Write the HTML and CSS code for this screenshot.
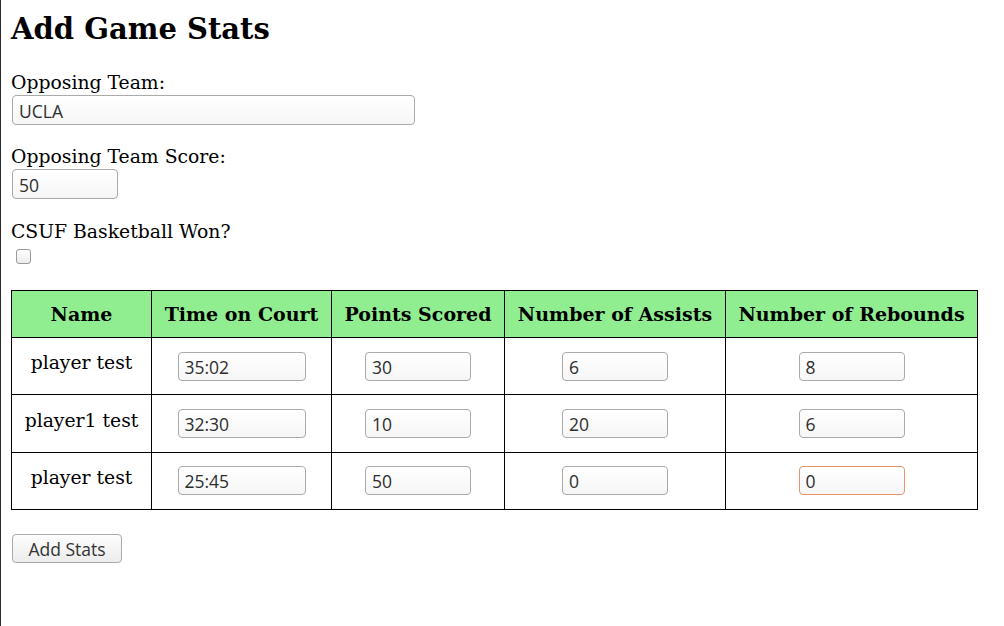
FILE: index.html
```html
<!DOCTYPE html>
<html>
<head>
<meta charset="utf-8">
<link rel="stylesheet" href="styles.css">
</head>
<body>
<div class="page">
  <h1 class="title">Add Game Stats</h1>
  <div class="field">
    <label class="label">Opposing Team:</label>
    <input class="input input-wide" type="text" value="UCLA">
  </div>
  <div class="field">
    <label class="label">Opposing Team Score:</label>
    <input class="input input-short" type="text" value="50">
  </div>
  <div class="field">
    <label class="label">CSUF Basketball Won?</label>
    <span class="checkbox"></span>
  </div>
  <table class="stats">
    <colgroup>
      <col class="c-name"><col class="c-time"><col class="c-pts"><col class="c-ast"><col class="c-reb">
    </colgroup>
    <thead>
      <tr>
        <th>Name</th><th>Time on Court</th><th>Points Scored</th><th>Number of Assists</th><th>Number of Rebounds</th>
      </tr>
    </thead>
    <tbody>
      <tr>
        <td class="name">player test</td>
        <td><input class="input input-time" type="text" value="35:02"></td>
        <td><input class="input input-num" type="text" value="30"></td>
        <td><input class="input input-num" type="text" value="6"></td>
        <td><input class="input input-num" type="text" value="8"></td>
      </tr>
      <tr>
        <td class="name">player1 test</td>
        <td><input class="input input-time" type="text" value="32:30"></td>
        <td><input class="input input-num" type="text" value="10"></td>
        <td><input class="input input-num" type="text" value="20"></td>
        <td><input class="input input-num" type="text" value="6"></td>
      </tr>
      <tr>
        <td class="name">player test</td>
        <td><input class="input input-time" type="text" value="25:45"></td>
        <td><input class="input input-num" type="text" value="50"></td>
        <td><input class="input input-num" type="text" value="0"></td>
        <td><input class="input input-num input-invalid" type="text" value="0"></td>
      </tr>
    </tbody>
  </table>
  <button class="button" type="button">Add Stats</button>
</div>
</body>
</html>
```

FILE: styles.css
```css
html, body {
  margin: 0;
  padding: 0;
  background: #ffffff;
}

.page {
  box-sizing: border-box;
  height: 626px;
  border-left: 1px solid #2a2a2a;
  padding: 12px 0 0 10px;
  font-family: "DejaVu Serif", serif;
  font-size: 18.8px;
  color: #000;
  display: flex;
  flex-direction: column;
  align-items: flex-start;
}

.title {
  font-size: 29px;
  font-weight: bold;
  margin: 0 0 26px 0;
  line-height: 34px;
}

.field {
  display: flex;
  flex-direction: column;
  align-items: flex-start;
  margin-bottom: 21px;
}

.field + .field + .field {
  margin-top: 1px;
}

.label {
  line-height: 22px;
}

.input {
  box-sizing: border-box;
  height: 30px;
  border: 1px solid #aaaaaa;
  border-radius: 4px;
  background: linear-gradient(#ffffff, #f6f6f6);
  font-family: "Open Sans", sans-serif;
  font-size: 17.5px;
  color: #2e2e2e;
  padding: 1px 6px 0 6px;
  margin: 0 0 0 1px;
  outline: none;
}

.input-wide {
  width: 403px;
  margin-top: 1px;
}

.input-short {
  width: 106px;
  margin-top: 1px;
}

.checkbox {
  box-sizing: border-box;
  width: 15px;
  height: 15px;
  border: 1px solid #9a9a9a;
  border-radius: 3px;
  background: linear-gradient(#ffffff, #ececec);
  margin: 6px 0 0 5px;
}

.stats {
  border-collapse: collapse;
  width: 967px;
  margin: 5px 0 0 0;
}

.c-name { width: 140px; }
.c-time { width: 180px; }
.c-pts { width: 173px; }
.c-ast { width: 221px; }
.c-reb { width: 252px; }

.stats th,
.stats td {
  border: 1px solid #000;
  text-align: center;
  padding: 0;
}

.stats th {
  background: #90ee90;
  height: 46px;
  font-weight: bold;
  font-size: 19px;
}

.stats td {
  height: 56.4px;
}

.stats td.name {
  padding-bottom: 7px;
  box-sizing: border-box;
}

.input-time,
.input-num {
  height: 29px;
  margin: 0;
  vertical-align: middle;
}

.input-time {
  width: 128px;
}

.input-num {
  width: 106px;
}

.input-invalid {
  border-color: #e8926f;
}

.button {
  margin-top: 24px;
  margin-left: 1px;
  box-sizing: border-box;
  width: 110px;
  height: 29px;
  border: 1px solid #aaaaaa;
  border-radius: 4px;
  background: linear-gradient(#fdfdfd, #ececec);
  font-family: "Open Sans", sans-serif;
  font-size: 17.5px;
  color: #333;
  padding: 0;
}
```
